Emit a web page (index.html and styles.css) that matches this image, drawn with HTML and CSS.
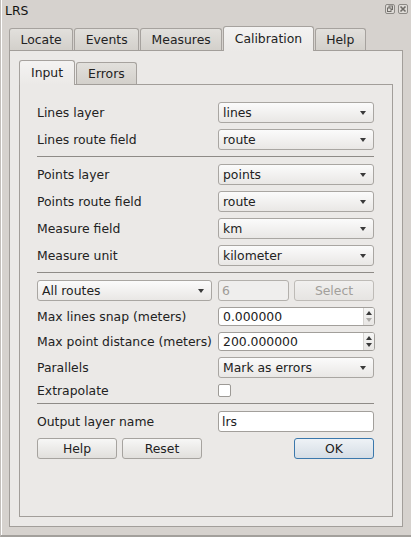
FILE: index.html
```html
<!DOCTYPE html>
<html>
<head>
<meta charset="utf-8">
<title>LRS</title>
<link rel="stylesheet" href="styles.css">
</head>
<body>
<div class="window">
  <div class="titlebar">
    <span class="title">LRS</span>
    <div class="tb-buttons">
      <span class="tb-btn">
        <svg width="8" height="8" viewBox="0 0 8 8"><rect x="3" y="1" width="3.5" height="3.5" fill="none" stroke="#6f6c68" stroke-width="1"/><rect x="1.5" y="3" width="3.5" height="3.5" fill="#dedbd7" stroke="#6f6c68" stroke-width="1"/></svg>
      </span>
      <span class="tb-btn">
        <svg width="8" height="8" viewBox="0 0 8 8"><path d="M1.5 1.5 L6.5 6.5 M6.5 1.5 L1.5 6.5" stroke="#6f6c68" stroke-width="1.6"/></svg>
      </span>
    </div>
  </div>
  <div class="outer">
    <div class="tabbar">
      <div class="tab">Locate</div>
      <div class="tab">Events</div>
      <div class="tab">Measures</div>
      <div class="tab active">Calibration</div>
      <div class="tab">Help</div>
    </div>
    <div class="pane">
      <div class="tabbar">
        <div class="tab inner-tab active">Input</div>
        <div class="tab inner-tab">Errors</div>
      </div>
      <div class="pane inner-pane">
        <div class="form">
          <div class="label">Lines layer</div>
          <div class="combo"><span>lines</span><i class="arrow"></i></div>
          <div class="label">Lines route field</div>
          <div class="combo"><span>route</span><i class="arrow"></i></div>

          <div class="sep"></div>

          <div class="label">Points layer</div>
          <div class="combo"><span>points</span><i class="arrow"></i></div>
          <div class="label">Points route field</div>
          <div class="combo"><span>route</span><i class="arrow"></i></div>
          <div class="label">Measure field</div>
          <div class="combo"><span>km</span><i class="arrow"></i></div>
          <div class="label">Measure unit</div>
          <div class="combo"><span>kilometer</span><i class="arrow"></i></div>

          <div class="sep"></div>

          <div class="wide-row">
            <div class="combo routes-combo"><span>All routes</span><i class="arrow"></i></div>
            <div class="edit disabled num-edit">6</div>
            <div class="button disabled select-btn">Select</div>
          </div>

          <div class="label">Max lines snap (meters)</div>
          <div class="spin">
            <span class="spin-text">0.000000</span>
            <span class="spin-btns"><i class="up"></i><i class="down off"></i></span>
          </div>
          <div class="label">Max point distance (meters)</div>
          <div class="spin">
            <span class="spin-text">200.000000</span>
            <span class="spin-btns"><i class="up"></i><i class="down"></i></span>
          </div>
          <div class="label">Parallels</div>
          <div class="combo"><span>Mark as errors</span><i class="arrow"></i></div>
          <div class="label check-label">Extrapolate</div>
          <div class="check-cell"><span class="checkbox"></span></div>

          <div class="sep"></div>

          <div class="label">Output layer name</div>
          <div class="edit">lrs</div>

          <div class="wide-row buttons-row">
            <div class="button">Help</div>
            <div class="button">Reset</div>
            <div class="spacer"></div>
            <div class="button default">OK</div>
          </div>
        </div>
      </div>
    </div>
  </div>
</div>
</body>
</html>
```
FILE: styles.css
```css
* { box-sizing: border-box; }
html, body {
  margin: 0;
  padding: 0;
  width: 411px;
  height: 537px;
  overflow: hidden;
  background: #d6d2ce;
}
body {
  font-family: "DejaVu Sans", "Liberation Sans", sans-serif;
  font-size: 12.4px;
  color: #222222;
}
.window {
  width: 411px;
  height: 537px;
  display: flex;
  flex-direction: column;
  border-left: 1px solid #c2beba;
  box-shadow: inset 1px 0 0 #ffffff;
  border-bottom: 2px solid #a3a09c;
}
.titlebar {
  height: 20px;
  display: flex;
  align-items: center;
  justify-content: space-between;
  padding: 0 3px 0 4px;
  flex: none;
}
.title { color: #111; }
.tb-buttons {
  display: flex;
  gap: 3px;
  align-items: center;
  margin-top: -3px;
}
.tb-btn {
  width: 10px;
  height: 10px;
  border: 1px solid #8c8985;
  border-radius: 2px;
  background: #dedbd7;
  display: flex;
  align-items: center;
  justify-content: center;
}
.outer {
  flex: 1;
  display: flex;
  flex-direction: column;
  margin: 6px 8px 8px 8px;
}
.tabbar {
  height: 25px;
  margin-bottom: -1px;
  display: flex;
  align-items: flex-end;
  gap: 1px;
  position: relative;
  z-index: 1;
  flex: none;
}
.tab {
  height: 22px;
  margin-bottom: 1px;
  padding: 0 10.5px;
  border: 1px solid #a6a29e;
  border-bottom: none;
  border-radius: 3px 3px 0 0;
  background: linear-gradient(#e2e0dc, #d3d0cb);
  display: flex;
  align-items: center;
}
.tab.active {
  height: 25px;
  margin-bottom: 0;
  padding-bottom: 2px;
  background: linear-gradient(#f4f3f2, #ebe9e7);
}
.inner-tab { padding: 0 11px; }
.pane {
  flex: 1;
  display: flex;
  flex-direction: column;
  border: 1px solid #a29e9a;
  background: #ebe9e7;
  padding: 9px;
}
.inner-pane {
  padding: 17px;
}
.form {
  display: grid;
  grid-template-columns: 181px 156px;
  row-gap: 6px;
  align-items: center;
}
.label {
  white-space: nowrap;
}
.combo {
  height: 21px;
  border: 1px solid #a9a6a2;
  border-radius: 3px;
  background: linear-gradient(#fbfbfb, #e9e7e5);
  display: flex;
  align-items: center;
  justify-content: space-between;
  padding: 0 7px 0 4px;
}
.arrow {
  width: 0;
  height: 0;
  border-left: 3.5px solid transparent;
  border-right: 3.5px solid transparent;
  border-top: 4px solid #3a3a3a;
}
.sep {
  grid-column: 1 / -1;
  height: 1px;
  background: #8e8b87;
  margin-bottom: 1px;
}
.wide-row {
  grid-column: 1 / -1;
  display: flex;
  align-items: center;
}
.routes-combo { width: 175px; margin-right: 6px; }
.edit {
  height: 21px;
  border: 1px solid #a29f9b;
  border-radius: 3px;
  background: #ffffff;
  display: flex;
  align-items: center;
  padding: 0 3px;
}
.edit.disabled {
  background: #efeeed;
  color: #9f9c98;
  border-color: #b3b0ac;
}
.num-edit { width: 71px; margin-right: 5px; }
.button {
  height: 21px;
  width: 80px;
  border: 1px solid #a6a39f;
  border-radius: 3px;
  background: linear-gradient(#f7f7f6, #e1dfdc);
  display: flex;
  align-items: center;
  justify-content: center;
}
.button.disabled {
  color: #a29f9b;
  border-color: #bebbb7;
  background: linear-gradient(#f1f0ef, #e6e4e2);
}
.buttons-row { gap: 5px; }
.spacer { flex: 1; }
.button.default {
  border-color: #3b78ac;
  background: linear-gradient(#eef2f6, #d5dde5);
}
.spin {
  height: 19px;
  width: 157px;
  border: 1px solid #a29f9b;
  border-radius: 3px;
  background: #ffffff;
  display: flex;
  align-items: stretch;
}
.spin-text {
  flex: 1;
  display: flex;
  align-items: center;
  padding-left: 4px;
}
.spin-btns {
  width: 11px;
  border-left: 1px solid #d6d4d1;
  background: linear-gradient(#f6f6f5, #e8e6e4);
  display: flex;
  flex-direction: column;
  align-items: center;
  justify-content: center;
  gap: 3px;
  border-radius: 0 2px 2px 0;
}
.up, .down {
  width: 0;
  height: 0;
  border-left: 3.5px solid transparent;
  border-right: 3.5px solid transparent;
}
.up { border-bottom: 4px solid #3a3a3a; }
.down { border-top: 4px solid #3a3a3a; }
.down.off { border-top-color: #acaaa7; }
.check-cell {
  height: 13px;
  display: flex;
}
.checkbox {
  width: 13px;
  height: 13px;
  border: 1px solid #9d9a96;
  border-radius: 2px;
  background: #ffffff;
}
.check-label { line-height: 13px; }
```
